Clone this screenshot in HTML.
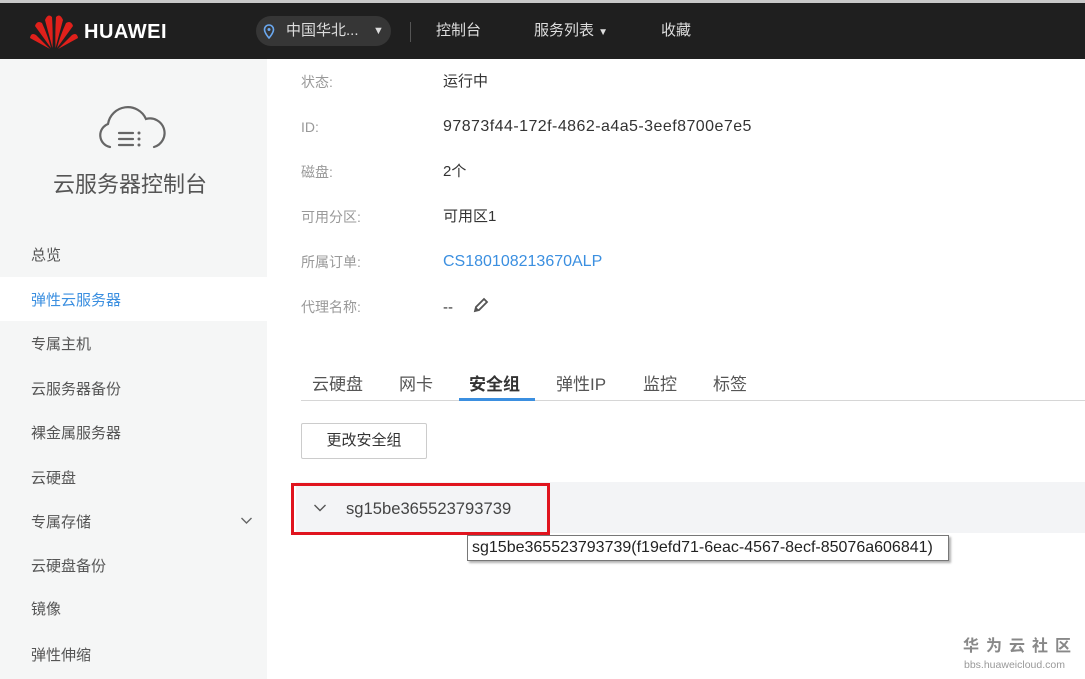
<!DOCTYPE html>
<html><head><meta charset="utf-8"><style>
*{margin:0;padding:0;box-sizing:border-box}
body{width:1085px;height:679px;overflow:hidden;background:#fff;font-family:"Liberation Sans","Noto Sans CJK SC",sans-serif;color:#333;position:relative}
.top{position:absolute;left:0;top:0;width:1085px;height:59px;background:#1f1f1f;border-top:3px solid #c8c8c8}
.abs{position:absolute;white-space:nowrap;line-height:20px}
.side{position:absolute;left:0;top:59px;width:267px;height:620px;background:#f5f6f6}
.nav{position:absolute;left:31px;font-size:15px;color:#555;line-height:20px}
.lab{position:absolute;left:301px;font-size:14px;color:#999;line-height:20px}
.val{position:absolute;left:443px;font-size:15px;color:#333;line-height:20px;white-space:nowrap}
.tab{position:absolute;top:374px;font-size:17px;color:#555;line-height:22px}
</style></head><body>
<div class="top">
  <svg class="abs" style="left:30px;top:9px" width="48" height="38" viewBox="0 0 48 38">
    <g fill="#e0201b">
      <path d="M22.5 36 L15 8 Q18 1 22 5 Q23 20 22.5 36Z"/><path d="M25.5 36 L33 8 Q30 1 26 5 Q25 20 25.5 36Z"/>
      <path d="M21 36 L5 14 Q7 8 12 11 Q18 24 21 36Z"/><path d="M27 36 L43 14 Q41 8 36 11 Q30 24 27 36Z"/>
      <path d="M20 37 L0 26 Q1 20 6 23Z"/><path d="M28 37 L48 26 Q47 20 42 23Z"/>
    </g></svg>
  <div class="abs" style="left:84px;top:19px;color:#fff;font-weight:bold;font-size:20px;letter-spacing:0.5px">HUAWEI</div>
  <div class="abs" style="left:256px;top:13px;width:135px;height:30px;border-radius:15px;background:#363636"></div>
  <svg class="abs" style="left:263px;top:21px" width="12" height="15" viewBox="0 0 12 15"><path d="M6 1a4.5 4.5 0 0 0-4.5 4.5C1.5 9 6 14 6 14s4.5-5 4.5-8.5A4.5 4.5 0 0 0 6 1z" fill="none" stroke="#6aa8f0" stroke-width="1.6"/><circle cx="6" cy="5.5" r="1.5" fill="#6aa8f0"/></svg>
  <div class="abs" style="left:286px;top:18px;color:#ddd;font-size:15px">中国华北...</div>
  <div class="abs" style="left:373px;top:18px;color:#ddd;font-size:11px">▼</div>
  <div class="abs" style="left:410px;top:19px;width:1px;height:20px;background:#555"></div>
  <div class="abs" style="left:436px;top:18px;color:#ddd;font-size:15px">控制台</div>
  <div class="abs" style="left:534px;top:18px;color:#ddd;font-size:15px">服务列表 <span style="font-size:10px">▼</span></div>
  <div class="abs" style="left:661px;top:18px;color:#ddd;font-size:15px">收藏</div>
</div>
<div class="side">
  <svg class="abs" style="left:96px;top:40px" width="72" height="54" viewBox="0 0 72 54">
    <path d="M14 48 A12 12 0 0 1 12 25 A20 20 0 0 1 50 20 A13 13 0 0 1 58 48" fill="none" stroke="#666" stroke-width="2.2" stroke-linecap="round"/>
    <path d="M23 34h14M23 40h14M23 46h14" stroke="#666" stroke-width="2.2" stroke-linecap="round"/>
    <circle cx="43" cy="34" r="1.5" fill="#666"/><circle cx="43" cy="40" r="1.5" fill="#666"/><circle cx="43" cy="46" r="1.5" fill="#666"/>
  </svg>
  <div class="abs" style="left:53px;top:113px;font-size:22px;color:#555;line-height:26px">云服务器控制台</div>
  <div class="abs" style="left:0;top:218px;width:267px;height:44px;background:#fff"></div>
</div>
<div class="nav" style="top:246px">总览</div>
<div class="nav" style="top:291px;color:#3b8fe0">弹性云服务器</div>
<div class="nav" style="top:335px">专属主机</div>
<div class="nav" style="top:380px">云服务器备份</div>
<div class="nav" style="top:424px">裸金属服务器</div>
<div class="nav" style="top:469px">云硬盘</div>
<div class="nav" style="top:513px">专属存储</div>
<svg class="abs" style="left:240px;top:516px" width="13" height="9"><path d="M1.5 2l5 5 5-5" fill="none" stroke="#666" stroke-width="1.4"/></svg>
<div class="nav" style="top:557px">云硬盘备份</div>
<div class="nav" style="top:600px">镜像</div>
<div class="nav" style="top:646px">弹性伸缩</div>

<div class="lab" style="top:72px">状态:</div><div class="val" style="top:72px">运行中</div>
<div class="lab" style="top:117px">ID:</div><div class="val" style="top:117px;font-size:16px;letter-spacing:0.45px">97873f44-172f-4862-a4a5-3eef8700e7e5</div>
<div class="lab" style="top:162px">磁盘:</div><div class="val" style="top:162px;">2个</div>
<div class="lab" style="top:207px">可用分区:</div><div class="val" style="top:207px">可用区1</div>
<div class="lab" style="top:252px">所属订单:</div><div class="val" style="top:252px;color:#3b8fe0;font-size:16px">CS180108213670ALP</div>
<div class="lab" style="top:297px">代理名称:</div><div class="val" style="top:298px">--</div>
<svg class="abs" style="left:472px;top:296px" width="18" height="18" viewBox="0 0 18 18"><path d="M3 15l1-4 8-8 3 3-8 8z" fill="none" stroke="#555" stroke-width="1.8"/><path d="M3 15l1-4 3 3z" fill="#555"/></svg>

<div class="tab" style="left:312px">云硬盘</div>
<div class="tab" style="left:399px">网卡</div>
<div class="tab" style="left:469px;color:#333;font-weight:bold">安全组</div>
<div class="tab" style="left:556px">弹性IP</div>
<div class="tab" style="left:643px">监控</div>
<div class="tab" style="left:713px">标签</div>
<div class="abs" style="left:301px;top:400px;width:784px;height:1px;background:#d6d6d6"></div>
<div class="abs" style="left:459px;top:398px;width:76px;height:3px;background:#3b8fe0"></div>

<div class="abs" style="left:301px;top:423px;width:126px;height:36px;border:1px solid #ccc;border-radius:2px;font-size:15px;text-align:center;line-height:34px;color:#333">更改安全组</div>

<div class="abs" style="left:296px;top:482px;width:789px;height:51px;background:#f3f4f6"></div>
<div class="abs" style="left:291px;top:483px;width:259px;height:52px;border:3px solid #e0141e"></div>
<svg class="abs" style="left:313px;top:503px" width="14" height="10"><path d="M1.5 2l5.5 5.5 5.5-5.5" fill="none" stroke="#555" stroke-width="1.4"/></svg>
<div class="abs" style="left:346px;top:499px;font-size:16.6px;color:#444">sg15be365523793739</div>

<div class="abs" style="left:467px;top:535px;width:482px;height:26px;background:#fff;border:1px solid #777;box-shadow:2px 2px 2px rgba(0,0,0,.3);font-size:16px;line-height:24px;padding-left:4px;color:#222">sg15be365523793739(f19efd71-6eac-4567-8ecf-85076a606841)</div>

<div class="abs" style="left:963px;top:637px;font-size:16px;color:#888;letter-spacing:7px;font-weight:bold">华为云社区</div>
<div class="abs" style="left:964px;top:655px;font-size:10.5px;color:#999">bbs.huaweicloud.com</div>
</body></html>
